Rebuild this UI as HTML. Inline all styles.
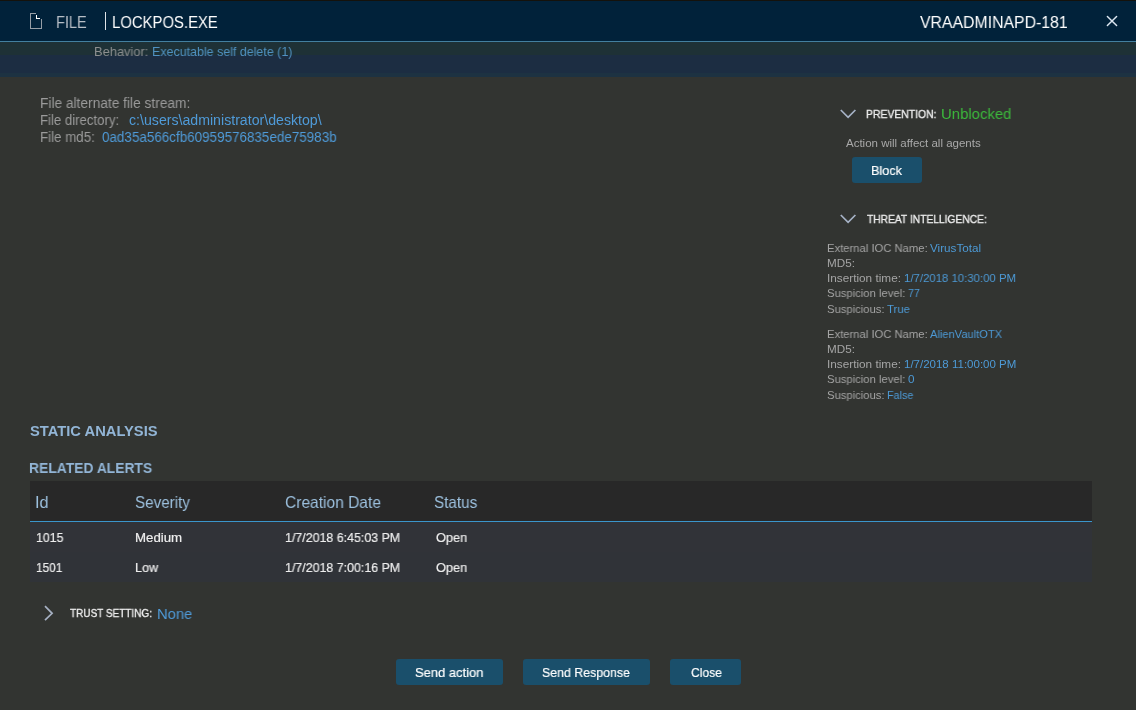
<!DOCTYPE html>
<html><head><meta charset="utf-8">
<style>
html,body{margin:0;padding:0;}
body{width:1136px;height:710px;overflow:hidden;position:relative;background:#323431;font-family:"Liberation Sans",sans-serif;}
.abs{position:absolute;}
.t{position:absolute;white-space:nowrap;transform-origin:0 0;will-change:transform;}
.btn{position:absolute;background:#1a4f6b;border-radius:3px;}
</style></head><body>
<div class="abs" style="left:0;top:0;width:1136px;height:1px;background:#14120c"></div>
<div class="abs" style="left:0;top:1px;width:1136px;height:40px;background:#01223a"></div>
<div class="abs" style="left:0;top:41px;width:1136px;height:1px;background:#437f9f"></div>
<div class="abs" style="left:0;top:42px;width:1136px;height:13px;background:#1e3136"></div>
<div class="abs" style="left:0;top:55px;width:1136px;height:18px;background:#1c2d42"></div>
<div class="abs" style="left:0;top:73px;width:1136px;height:4px;background:#1d3242"></div>
<!-- file icon -->
<div class="abs" style="left:30px;top:13px;width:6px;height:1px;background:#969ea6"></div>
<div class="abs" style="left:30px;top:13px;width:1px;height:16px;background:#969ea6"></div>
<div class="abs" style="left:30px;top:28px;width:12px;height:1px;background:#969ea6"></div>
<div class="abs" style="left:41px;top:19px;width:1px;height:10px;background:#969ea6"></div>
<div class="abs" style="left:36px;top:15px;width:1px;height:4px;background:#ffffff"></div>
<div class="abs" style="left:36px;top:18px;width:4px;height:1px;background:#ffffff"></div>
<div class="abs" style="left:105px;top:12px;width:1px;height:18px;background:#dfe3e7"></div>
<!-- close X -->
<svg class="abs" style="left:1106px;top:15px" width="12" height="12" viewBox="0 0 12 12">
<path d="M1.4 1.5 L10.6 10.5 M10.6 1.5 L1.4 10.5" stroke="#dde7f1" stroke-width="1.5" stroke-linecap="round"/>
</svg>
<!-- chevrons -->
<svg class="abs" style="left:839px;top:108px" width="18" height="12" viewBox="0 0 18 12">
<path d="M1.8 2 L9.1 9.4 L16.4 2" fill="none" stroke="#a6b2c6" stroke-width="1.7"/>
</svg>
<svg class="abs" style="left:839px;top:213px" width="18" height="12" viewBox="0 0 18 12">
<path d="M1.8 2 L9.1 9.4 L16.4 2" fill="none" stroke="#a6b2c6" stroke-width="1.7"/>
</svg>
<svg class="abs" style="left:43px;top:604px" width="12" height="18" viewBox="0 0 12 18">
<path d="M2 2.2 L9.1 9.3 L2 16.2" fill="none" stroke="#a6b0c2" stroke-width="1.7"/>
</svg>
<!-- block button -->
<div class="btn" style="left:852px;top:157px;width:70px;height:26px"></div>
<!-- table -->
<div class="abs" style="left:30px;top:481px;width:1062px;height:40px;background:#282828"></div>
<div class="abs" style="left:30px;top:521px;width:1062px;height:1px;background:#3a96cc"></div>
<div class="abs" style="left:30px;top:522px;width:1062px;height:30px;background:#313338"></div>
<div class="abs" style="left:30px;top:552px;width:1062px;height:30px;background:#303338"></div>
<!-- bottom buttons -->
<div class="btn" style="left:396px;top:659px;width:107px;height:26px"></div>
<div class="btn" style="left:523px;top:659px;width:127px;height:26px"></div>
<div class="btn" style="left:670px;top:659px;width:71px;height:26px"></div>
<div class="t" style="left:56.14px;top:13.61px;font-size:17px;line-height:17px;font-weight:400;transform:scaleX(0.8571);"><span style="color:#b7bec6">FILE</span></div>
<div class="t" style="left:112.12px;top:13.61px;font-size:17px;line-height:17px;font-weight:400;transform:scaleX(0.8750);"><span style="color:#ffffff">LOCKPOS.EXE</span></div>
<div class="t" style="left:920.00px;top:13.61px;font-size:17px;line-height:17px;font-weight:400;transform:scaleX(0.9304);"><span style="color:#ffffff">VRAADMINAPD-181</span></div>
<div class="t" style="left:94.01px;top:45.40px;font-size:13px;line-height:13px;font-weight:400;transform:scaleX(0.9887);"><span style="color:#8d8f90">Behavior:</span></div>
<div class="t" style="left:152.04px;top:45.40px;font-size:13px;line-height:13px;font-weight:400;transform:scaleX(0.9572);"><span style="color:#5092c2">Executable self delete (1)</span></div>
<div class="t" style="left:39.72px;top:95.65px;font-size:14px;line-height:14px;font-weight:400;transform:scaleX(0.9803);"><span style="color:#9b9b9b">File alternate file stream:</span></div>
<div class="t" style="left:39.76px;top:113.35px;font-size:14px;line-height:14px;font-weight:400;transform:scaleX(0.9415);"><span style="color:#9b9b9b">File directory:</span></div>
<div class="t" style="left:129.00px;top:113.35px;font-size:14px;line-height:14px;font-weight:400;transform:scaleX(1.0105);"><span style="color:#4f9bd9">c:\users\administrator\desktop\</span></div>
<div class="t" style="left:39.75px;top:130.15px;font-size:14px;line-height:14px;font-weight:400;transform:scaleX(0.9518);"><span style="color:#9b9b9b">File md5:</span></div>
<div class="t" style="left:101.80px;top:130.15px;font-size:14px;line-height:14px;font-weight:400;transform:scaleX(0.9598);"><span style="color:#4f9bd9">0ad35a566cfb60959576835ede75983b</span></div>
<div class="t" style="left:866.40px;top:109.27px;font-size:11.5px;line-height:11.5px;font-weight:400;transform:scaleX(0.9039);-webkit-text-stroke:0.35px #eeeeee;"><span style="color:#eeeeee">PREVENTION:</span></div>
<div class="t" style="left:941.01px;top:106.10px;font-size:15px;line-height:15px;font-weight:400;transform:scaleX(0.9928);"><span style="color:#3cbb3c">Unblocked</span></div>
<div class="t" style="left:846.20px;top:137.57px;font-size:11.5px;line-height:11.5px;font-weight:400;"><span style="color:#a9a9a9">Action will affect all agents</span></div>
<div class="t" style="left:871.06px;top:163.87px;font-size:13.5px;line-height:13.5px;font-weight:400;transform:scaleX(0.9375);-webkit-text-stroke:0.2px #ffffff;"><span style="color:#ffffff">Block</span></div>
<div class="t" style="left:867.00px;top:214.37px;font-size:11.5px;line-height:11.5px;font-weight:400;transform:scaleX(0.8910);-webkit-text-stroke:0.35px #eeeeee;"><span style="color:#eeeeee">THREAT INTELLIGENCE:</span></div>
<div class="t" style="left:826.82px;top:243.37px;font-size:11.5px;line-height:11.5px;font-weight:400;transform:scaleX(0.9782);"><span style="color:#a5a5a5">External IOC Name:</span></div>
<div class="t" style="left:930.00px;top:243.37px;font-size:11.5px;line-height:11.5px;font-weight:400;transform:scaleX(1.0160);"><span style="color:#4d9ad6">VirusTotal</span></div>
<div class="t" style="left:826.78px;top:258.27px;font-size:11.5px;line-height:11.5px;font-weight:400;transform:scaleX(1.0154);"><span style="color:#a5a5a5">MD5:</span></div>
<div class="t" style="left:826.78px;top:273.17px;font-size:11.5px;line-height:11.5px;font-weight:400;transform:scaleX(1.0239);"><span style="color:#a5a5a5">Insertion time:</span></div>
<div class="t" style="left:903.71px;top:273.17px;font-size:11.5px;line-height:11.5px;font-weight:400;transform:scaleX(0.9902);"><span style="color:#4d9ad6">1/7/2018 10:30:00 PM</span></div>
<div class="t" style="left:827.00px;top:288.17px;font-size:11.5px;line-height:11.5px;font-weight:400;transform:scaleX(0.9797);"><span style="color:#a5a5a5">Suspicion level:</span></div>
<div class="t" style="left:907.80px;top:288.17px;font-size:11.5px;line-height:11.5px;font-weight:400;transform:scaleX(0.9231);"><span style="color:#4d9ad6">77</span></div>
<div class="t" style="left:827.00px;top:303.87px;font-size:11.5px;line-height:11.5px;font-weight:400;transform:scaleX(0.9793);"><span style="color:#a5a5a5">Suspicious:</span></div>
<div class="t" style="left:886.80px;top:303.87px;font-size:11.5px;line-height:11.5px;font-weight:400;transform:scaleX(0.9870);"><span style="color:#4d9ad6">True</span></div>
<div class="t" style="left:826.82px;top:329.17px;font-size:11.5px;line-height:11.5px;font-weight:400;transform:scaleX(0.9782);"><span style="color:#a5a5a5">External IOC Name:</span></div>
<div class="t" style="left:930.20px;top:329.17px;font-size:11.5px;line-height:11.5px;font-weight:400;transform:scaleX(0.9653);"><span style="color:#4d9ad6">AlienVaultOTX</span></div>
<div class="t" style="left:826.78px;top:344.17px;font-size:11.5px;line-height:11.5px;font-weight:400;transform:scaleX(1.0154);"><span style="color:#a5a5a5">MD5:</span></div>
<div class="t" style="left:826.78px;top:358.97px;font-size:11.5px;line-height:11.5px;font-weight:400;transform:scaleX(1.0239);"><span style="color:#a5a5a5">Insertion time:</span></div>
<div class="t" style="left:903.70px;top:358.97px;font-size:11.5px;line-height:11.5px;font-weight:400;"><span style="color:#4d9ad6">1/7/2018 11:00:00 PM</span></div>
<div class="t" style="left:827.00px;top:374.07px;font-size:11.5px;line-height:11.5px;font-weight:400;transform:scaleX(0.9797);"><span style="color:#a5a5a5">Suspicion level:</span></div>
<div class="t" style="left:907.60px;top:374.07px;font-size:11.5px;line-height:11.5px;font-weight:400;transform:scaleX(1.0167);"><span style="color:#4d9ad6">0</span></div>
<div class="t" style="left:827.00px;top:389.87px;font-size:11.5px;line-height:11.5px;font-weight:400;transform:scaleX(0.9793);"><span style="color:#a5a5a5">Suspicious:</span></div>
<div class="t" style="left:886.66px;top:389.87px;font-size:11.5px;line-height:11.5px;font-weight:400;transform:scaleX(0.9370);"><span style="color:#4d9ad6">False</span></div>
<div class="t" style="left:30.00px;top:423.63px;font-size:14.5px;line-height:14.5px;font-weight:700;transform:scaleX(1.0151);"><span style="color:#92b5d6">STATIC ANALYSIS</span></div>
<div class="t" style="left:29.04px;top:460.73px;font-size:14.5px;line-height:14.5px;font-weight:700;transform:scaleX(0.9555);"><span style="color:#92b5d6">RELATED ALERTS</span></div>
<div class="t" style="left:35.22px;top:494.23px;font-size:16.5px;line-height:16.5px;font-weight:400;transform:scaleX(0.9833);"><span style="color:#9cc0de">Id</span></div>
<div class="t" style="left:134.68px;top:494.23px;font-size:16.5px;line-height:16.5px;font-weight:400;transform:scaleX(0.9220);"><span style="color:#9cc0de">Severity</span></div>
<div class="t" style="left:284.86px;top:494.23px;font-size:16.5px;line-height:16.5px;font-weight:400;transform:scaleX(0.9426);"><span style="color:#9cc0de">Creation Date</span></div>
<div class="t" style="left:434.47px;top:494.23px;font-size:16.5px;line-height:16.5px;font-weight:400;transform:scaleX(0.9261);"><span style="color:#9cc0de">Status</span></div>
<div class="t" style="left:35.65px;top:531.00px;font-size:13px;line-height:13px;font-weight:400;transform:scaleX(0.9464);-webkit-text-stroke:0.2px #eeeeee;"><span style="color:#eeeeee">1015</span></div>
<div class="t" style="left:135.28px;top:531.00px;font-size:13px;line-height:13px;font-weight:400;transform:scaleX(1.0200);-webkit-text-stroke:0.2px #eeeeee;"><span style="color:#eeeeee">Medium</span></div>
<div class="t" style="left:285.45px;top:531.00px;font-size:13px;line-height:13px;font-weight:400;transform:scaleX(0.9546);-webkit-text-stroke:0.2px #eeeeee;"><span style="color:#eeeeee">1/7/2018 6:45:03 PM</span></div>
<div class="t" style="left:436.00px;top:531.00px;font-size:13px;line-height:13px;font-weight:400;transform:scaleX(0.9839);-webkit-text-stroke:0.2px #eeeeee;"><span style="color:#eeeeee">Open</span></div>
<div class="t" style="left:35.69px;top:561.00px;font-size:13px;line-height:13px;font-weight:400;transform:scaleX(0.9071);-webkit-text-stroke:0.2px #eeeeee;"><span style="color:#eeeeee">1501</span></div>
<div class="t" style="left:135.33px;top:561.00px;font-size:13px;line-height:13px;font-weight:400;transform:scaleX(0.9696);-webkit-text-stroke:0.2px #eeeeee;"><span style="color:#eeeeee">Low</span></div>
<div class="t" style="left:285.45px;top:561.00px;font-size:13px;line-height:13px;font-weight:400;transform:scaleX(0.9546);-webkit-text-stroke:0.2px #eeeeee;"><span style="color:#eeeeee">1/7/2018 7:00:16 PM</span></div>
<div class="t" style="left:436.00px;top:561.00px;font-size:13px;line-height:13px;font-weight:400;transform:scaleX(0.9839);-webkit-text-stroke:0.2px #eeeeee;"><span style="color:#eeeeee">Open</span></div>
<div class="t" style="left:70.40px;top:608.27px;font-size:11.5px;line-height:11.5px;font-weight:400;transform:scaleX(0.8681);-webkit-text-stroke:0.35px #eeeeee;"><span style="color:#eeeeee">TRUST SETTING:</span></div>
<div class="t" style="left:157.02px;top:606.30px;font-size:15px;line-height:15px;font-weight:400;transform:scaleX(0.9829);"><span style="color:#4f9bd9">None</span></div>
<div class="t" style="left:414.74px;top:665.67px;font-size:13.5px;line-height:13.5px;font-weight:400;transform:scaleX(0.9600);-webkit-text-stroke:0.2px #ffffff;"><span style="color:#ffffff">Send action</span></div>
<div class="t" style="left:542.08px;top:665.67px;font-size:13.5px;line-height:13.5px;font-weight:400;transform:scaleX(0.9158);-webkit-text-stroke:0.2px #ffffff;"><span style="color:#ffffff">Send Response</span></div>
<div class="t" style="left:690.50px;top:665.67px;font-size:13.5px;line-height:13.5px;font-weight:400;transform:scaleX(0.8971);-webkit-text-stroke:0.2px #ffffff;"><span style="color:#ffffff">Close</span></div>
</body></html>
